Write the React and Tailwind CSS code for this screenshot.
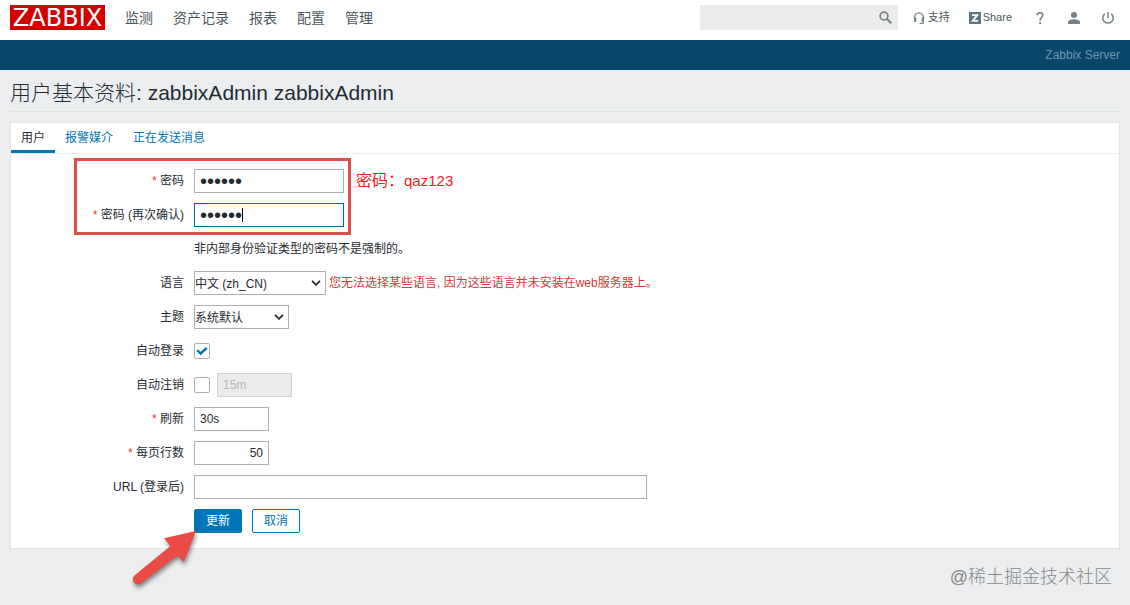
import React from "react";

const sans = 'font-["Liberation_Sans","Noto_Sans_CJK_SC",sans-serif]';

const field =
  "h-6 border border-[#acb0b4] bg-white px-[5px] text-xs text-[#1f2c33] outline-none";

const passwordField =
  "h-6 w-[150px] border bg-white px-[5px] text-xl leading-none text-[#1f2c33] outline-none";

function SearchIcon() {
  return (
    <svg viewBox="0 0 13 13" className="size-[13px] fill-none stroke-[#768085]" strokeWidth="1.6" aria-hidden="true">
      <circle cx="5" cy="5" r="3.9" />
      <path d="M7.900 7.900 12.200 12.200" strokeWidth="2.1" />
    </svg>
  );
}

function HeadsetIcon() {
  return (
    <svg viewBox="0 0 12 12" className="size-3 fill-none stroke-[#768085]" aria-hidden="true">
      <path d="M1.500 7V5.400a4.500 4.500 0 0 1 9 0V7" strokeWidth="1.4" />
      <path d="M2.200 5.800v4M9.800 5.800v4" strokeWidth="2.3" />
      <path d="M10.300 9v1.400q0 .9-1 .9H6.600" strokeWidth="1.2" />
    </svg>
  );
}

function ZIcon() {
  return (
    <svg viewBox="0 0 12 12" className="size-3" aria-hidden="true">
      <rect width="12" height="12" fill="#5f7580" />
      <path d="M3 3.100H8.200L3.800 8.900H9" fill="none" stroke="#fff" strokeWidth="1.8" />
    </svg>
  );
}

function HelpIcon() {
  return (
    <svg viewBox="0 0 12 12" className="size-3 fill-none stroke-[#768085]" strokeWidth="1.6" aria-hidden="true">
      <path d="M3.200 3.300C3.200 1.600 4.400.8 6 .8s2.800.9 2.800 2.400C8.800 5.200 6.100 5.400 6.100 8.400" />
      <path d="M6.100 10v2" strokeWidth="1.8" />
    </svg>
  );
}

function UserIcon() {
  return (
    <svg viewBox="0 0 12 12" className="size-3 fill-[#768085]" aria-hidden="true">
      <circle cx="6" cy="3" r="3" />
      <path d="M0 12V10.300C0 8.300 3 7.300 6 7.300s6 1 6 3V12Z" />
    </svg>
  );
}

function PowerIcon() {
  return (
    <svg viewBox="0 0 12 12" className="size-3 fill-none stroke-[#768085]" strokeWidth="1.5" aria-hidden="true">
      <path d="M6 0v6.300" />
      <path d="M2.800 1.800a5.200 5.200 0 1 0 6.400 0" />
    </svg>
  );
}

function Row({ label, htmlFor, required, children }) {
  return (
    <div className="flex min-h-6 items-center gap-[10px]">
      <div className="w-[173px] shrink-0 text-right">
        {label && (
          <label htmlFor={htmlFor}>
            {required && <span className="text-[#e33734]">* </span>}
            {label}
          </label>
        )}
      </div>
      {children}
    </div>
  );
}

function Select({ id, width, children }) {
  return (
    <div className={"relative " + width}>
      <select
        id={id}
        className="block h-6 w-full appearance-none border border-[#acb0b4] bg-white pt-px text-xs text-[#1f2c33] outline-none"
      >
        {children}
      </select>
      <svg
        viewBox="0 0 10 6"
        className="pointer-events-none absolute top-[9px] right-[5px] h-[6px] w-[10px] fill-none stroke-[#1f2c33]"
        strokeWidth="1.7"
        aria-hidden="true"
      >
        <path d="M1 .9 5 4.900 9 .9" />
      </svg>
    </div>
  );
}

function Checkbox({ id, checked }) {
  return (
    <span className="relative flex size-4">
      <input
        id={id}
        type="checkbox"
        defaultChecked={checked}
        className="peer size-4 appearance-none rounded-xs border border-[#acb0b4] bg-white"
      />
      <svg
        viewBox="0 0 16 16"
        className="pointer-events-none absolute inset-0 hidden size-4 fill-none stroke-[#0275b8] peer-checked:block"
        strokeWidth="2.4"
        aria-hidden="true"
      >
        <path d="M3.200 7.200 6.700 10.500 12.800 4.800" />
      </svg>
    </span>
  );
}

const menu = ["监测", "资产记录", "报表", "配置", "管理"];

export default function App() {
  return (
    <div className={"relative min-h-screen bg-[#ebedef] text-xs text-[#1f2c33] " + sans}>
      <header className="flex h-10 items-start justify-between bg-white pt-[5px] pl-[10px]">
        <div className="flex items-center gap-5">
          <a
            href="#home"
            className='flex h-[25px] w-[95px] items-center justify-center bg-[#d40000] font-["DejaVu_Sans",sans-serif] text-2xl leading-none text-white'
          >
            ZABBIX
          </a>
          <nav className="flex gap-5 text-sm text-[#4b5860]">
            {menu.map((item) => (
              <a key={item} href={"#" + item}>
                {item}
              </a>
            ))}
          </nav>
        </div>
        <div className="flex items-center pr-4 text-[11px] text-[#4b5860]">
          <form className="relative mr-[15px] w-[198px]" onSubmit={(e) => e.preventDefault()}>
            <input type="text" aria-label="搜索" className="block h-[25px] w-full bg-[#ebebeb] pr-7 pl-2 outline-none" />
            <button type="button" aria-label="搜索" className="absolute top-[6px] right-[6px]">
              <SearchIcon />
            </button>
          </form>
          <a href="#support" className="mr-[19px] flex items-center gap-[3px]">
            <HeadsetIcon />
            支持
          </a>
          <a href="#share" className="mr-[22px] flex items-center gap-[2px]">
            <ZIcon />
            Share
          </a>
          <div className="flex items-center gap-[22px]">
            <a href="#help" aria-label="帮助" className="block">
              <HelpIcon />
            </a>
            <a href="#profile" aria-label="用户" className="block">
              <UserIcon />
            </a>
            <button type="button" aria-label="退出" className="block">
              <PowerIcon />
            </button>
          </div>
        </div>
      </header>

      <div className="flex h-[30px] items-center justify-end bg-[#0a466a] px-[10px] text-[#6d93ab]">
        Zabbix Server
      </div>

      <main className="px-[10px]">
        <h1 className="flex h-[42px] items-center border-b border-[#dfe4e7] pt-1 text-[21px] leading-8 font-light">
          用户基本资料: zabbixAdmin zabbixAdmin
        </h1>

        <section className="relative mt-[10px] border border-[#dfe4e7] bg-white">
          <div role="tablist" className="flex h-[31px] border-b border-[#ebeef0]">
            <button type="button" role="tab" aria-selected="true" className="border-b-3 border-[#0275b8] px-[10px] pt-[3px]">
              用户
            </button>
            <button type="button" role="tab" aria-selected="false" className="border-b-3 border-transparent px-[10px] pt-[3px] text-[#0275b8]">
              报警媒介
            </button>
            <button type="button" role="tab" aria-selected="false" className="border-b-3 border-transparent px-[10px] pt-[3px] text-[#0275b8]">
              正在发送消息
            </button>
          </div>

          <form className="flex flex-col gap-[10px] py-[15px]" onSubmit={(e) => e.preventDefault()}>
            <Row label="密码" htmlFor="password1" required>
              <input
                id="password1"
                type="password"
                defaultValue="qaz123"
                className={passwordField + " border-[#acb0b4]"}
              />
              <span className="ml-[2px] text-[15px] text-[#ee1c1c]">
                <span className="text-base leading-none">密码：</span>qaz123
              </span>
            </Row>
            <Row label="密码 (再次确认)" htmlFor="password2" required>
              <span className="relative flex">
                <input
                  id="password2"
                  type="password"
                  defaultValue="qaz123"
                  className={passwordField + " border-[#006b9e]"}
                />
                <span className="absolute top-[5px] left-[48px] h-[14px] w-px bg-black" />
              </span>
            </Row>
            <Row>
              <span>非内部身份验证类型的密码不是强制的。</span>
            </Row>
            <Row label="语言" htmlFor="lang">
              <div className="flex items-center gap-[3px]">
                <Select id="lang" width="w-[132px]">
                  <option>中文 (zh_CN)</option>
                </Select>
                <span className="text-[#d93636]">您无法选择某些语言, 因为这些语言并未安装在web服务器上。</span>
              </div>
            </Row>
            <Row label="主题" htmlFor="theme">
              <Select id="theme" width="w-[95px]">
                <option>系统默认</option>
              </Select>
            </Row>
            <Row label="自动登录" htmlFor="autologin">
              <Checkbox id="autologin" checked />
            </Row>
            <Row label="自动注销" htmlFor="autologout">
              <div className="flex items-center gap-[7px]">
                <Checkbox id="autologout" />
                <input
                  type="text"
                  aria-label="自动注销时间"
                  defaultValue="15m"
                  disabled
                  className="h-6 w-[75px] border border-[#d0d3d5] bg-[#ebebeb] px-[5px] text-[#b3b6b8]"
                />
              </div>
            </Row>
            <Row label="刷新" htmlFor="refresh" required>
              <input id="refresh" type="text" defaultValue="30s" className={field + " w-[75px]"} />
            </Row>
            <Row label="每页行数" htmlFor="rows" required>
              <input id="rows" type="text" defaultValue="50" className={field + " w-[75px] text-right"} />
            </Row>
            <Row label="URL (登录后)" htmlFor="url">
              <input id="url" type="text" className={field + " w-[453px]"} />
            </Row>
            <Row>
              <div className="flex gap-[10px]">
                <button type="submit" className="h-6 w-12 rounded-xs border border-[#0275b8] bg-[#0275b8] text-white">
                  更新
                </button>
                <button type="button" className="h-6 w-12 rounded-xs border border-[#0275b8] bg-white text-[#0275b8]">
                  取消
                </button>
              </div>
            </Row>
          </form>

          <div className="pointer-events-none absolute top-[35px] left-[63px] h-[77px] w-[277px] border-3 border-[#dc504b]" />
          <svg
            viewBox="0 0 76 68"
            className="pointer-events-none absolute top-[404px] left-[115px] h-[68px] w-[76px] drop-shadow-[1px_3px_2px_rgba(0,0,0,0.45)]"
            aria-hidden="true"
          >
            <path
              d="M70 4 38 11.300 44.500 19 8.800 48.300A5 5 0 0 0 15 56.500L51.500 28.500 57.800 35Z"
              fill="#e94b45"
            />
          </svg>
        </section>
      </main>

      <div className="absolute right-[18px] bottom-[14px] text-lg font-light text-[#85888b]">@稀土掘金技术社区</div>
    </div>
  );
}
